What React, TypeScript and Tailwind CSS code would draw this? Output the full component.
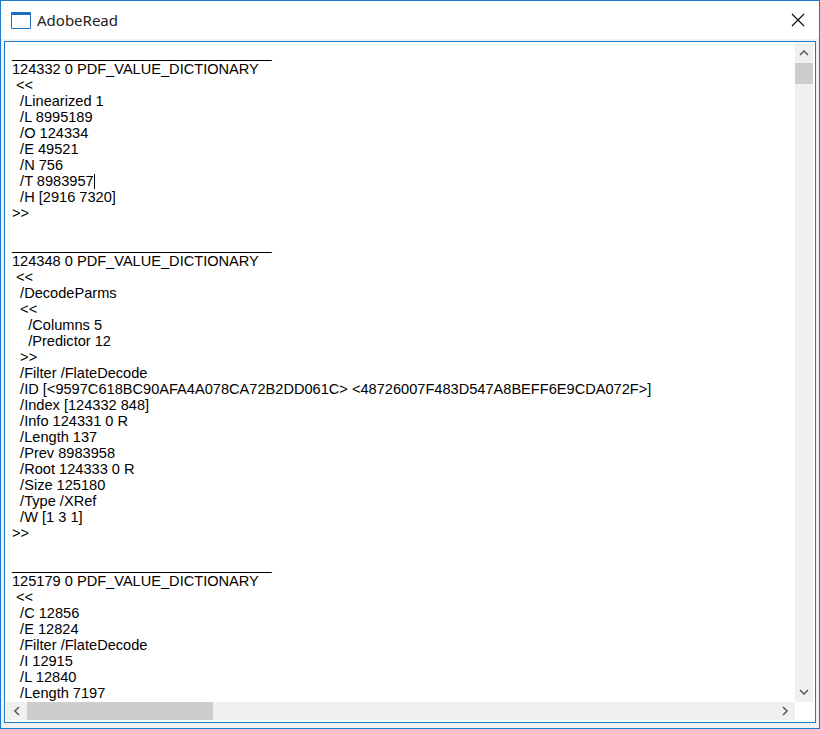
import React from "react";

const U = "________________________________";
const lines: string[] = [
  U,
  "124332 0 PDF_VALUE_DICTIONARY",
  " <<",
  "  /Linearized 1",
  "  /L 8995189",
  "  /O 124334",
  "  /E 49521",
  "  /N 756",
  "  /T 8983957|",
  "  /H [2916 7320]",
  ">>",
  "",
  U,
  "124348 0 PDF_VALUE_DICTIONARY",
  " <<",
  "  /DecodeParms",
  "  <<",
  "    /Columns 5",
  "    /Predictor 12",
  "  >>",
  "  /Filter /FlateDecode",
  "  /ID [<9597C618BC90AFA4A078CA72B2DD061C> <48726007F483D547A8BEFF6E9CDA072F>]",
  "  /Index [124332 848]",
  "  /Info 124331 0 R",
  "  /Length 137",
  "  /Prev 8983958",
  "  /Root 124333 0 R",
  "  /Size 125180",
  "  /Type /XRef",
  "  /W [1 3 1]",
  ">>",
  "",
  U,
  "125179 0 PDF_VALUE_DICTIONARY",
  " <<",
  "  /C 12856",
  "  /E 12824",
  "  /Filter /FlateDecode",
  "  /I 12915",
  "  /L 12840",
  "  /Length 7197",
];

export default function App() {
  return (
    <div className="w-[820px] h-[729px] border border-[#1a79cb] bg-[#f0f0f0] flex flex-col overflow-hidden">
      <div className="h-[38px] bg-white flex items-center shrink-0">
        <div className="ml-[10px] w-[20px] h-[17px] border border-[#1a6fc0] border-t-[3px] rounded-[1px]" />
        <div className="ml-[6px] text-[15px] text-[#222] font-['Open_Sans',sans-serif]">AdobeRead</div>
        <div className="ml-auto mr-[14px]">
          <svg width="14" height="14" viewBox="0 0 14 14"><path d="M1 1L13 13M13 1L1 13" stroke="#111" strokeWidth="1.2" /></svg>
        </div>
      </div>
      <div className="flex-1 min-h-0 px-[3px] pt-[2px] pb-[5px] flex">
        <div className="flex-1 min-h-0 border border-[#1a79cb] bg-white flex flex-col overflow-hidden">
          <div className="flex flex-1 min-h-0">
            <div className="flex-1 min-h-0 overflow-hidden pl-[7px] pt-[3px] text-[14.6px] leading-[16px] text-black whitespace-pre" style={{ fontFamily: '"Liberation Sans", Arial, sans-serif' }}>
              {lines.map((l, i) => (
                <div key={i} className="h-[16px] whitespace-pre">
                  {l.endsWith("|") ? (
                    <>
                      {l.slice(0, -1)}
                      <span className="inline-block w-px h-[15px] bg-black align-[-3px]" />
                    </>
                  ) : (
                    l || "\u00a0"
                  )}
                </div>
              ))}
            </div>
            <div className="w-[18px] bg-[#f0f0f0] flex flex-col items-center mr-[2px] mt-[1px]">
              <div className="h-[20px] flex items-center justify-center">
                <svg width="10" height="6" viewBox="0 0 10 6"><path d="M1 5L5 1L9 5" stroke="#606060" strokeWidth="1.6" fill="none" /></svg>
              </div>
              <div className="w-[18px] h-[21px] bg-[#cdcdcd]" />
              <div className="flex-1" />
              <div className="h-[20px] flex items-center justify-center">
                <svg width="10" height="6" viewBox="0 0 10 6"><path d="M1 1L5 5L9 1" stroke="#606060" strokeWidth="1.6" fill="none" /></svg>
              </div>
            </div>
          </div>
          <div className="h-[18px] bg-[#f0f0f0] flex items-center shrink-0 mr-[20px] ml-[1px] mb-[2px]">
            <div className="w-[21px] flex items-center justify-center">
              <svg width="6" height="10" viewBox="0 0 6 10"><path d="M5 1L1 5L5 9" stroke="#606060" strokeWidth="1.6" fill="none" /></svg>
            </div>
            <div className="w-[186px] h-[18px] bg-[#cdcdcd]" />
            <div className="flex-1" />
            <div className="w-[20px] flex items-center justify-center">
              <svg width="6" height="10" viewBox="0 0 6 10"><path d="M1 1L5 5L1 9" stroke="#606060" strokeWidth="1.6" fill="none" /></svg>
            </div>
          </div>
        </div>
      </div>
    </div>
  );
}
